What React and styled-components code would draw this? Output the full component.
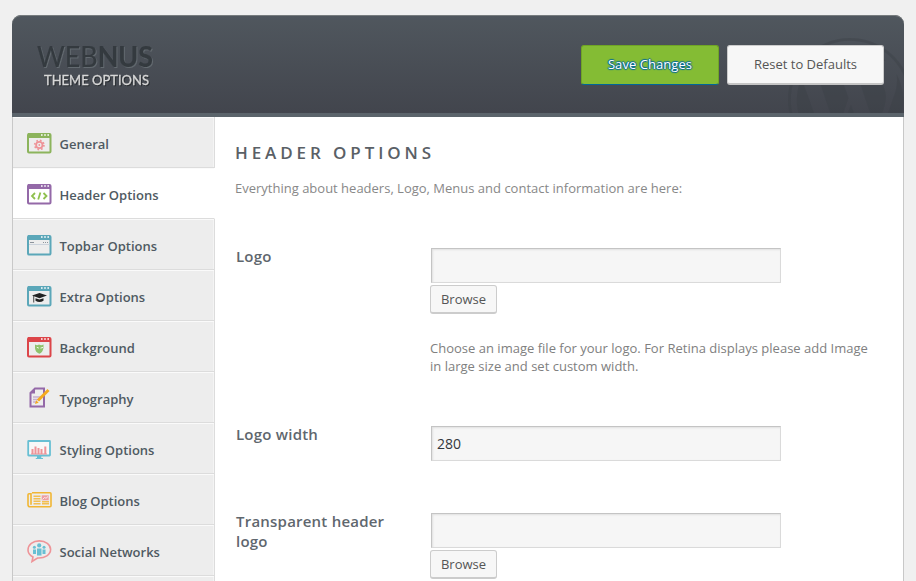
import React from "react";
import styled, { createGlobalStyle, css } from "styled-components";
import { FaWordpress } from "react-icons/fa";

const GlobalStyle = createGlobalStyle`
  * { box-sizing: border-box; }
  html, body { margin: 0; background: #f0f0f0; }
  body { height: 581px; overflow: hidden; font-family: "Open Sans", sans-serif; }
`;

const Panel = styled.div`
  width: 892px;
  height: 566px;
  margin: 15px 0 0 12px;
  display: flex;
  flex-direction: column;
`;

const Header = styled.header`
  position: relative;
  flex: 0 0 102px;
  display: flex;
  justify-content: space-between;
  align-items: flex-start;
  padding: 24px 20px 0 23px;
  overflow: hidden;
  border-radius: 9px 9px 0 0;
  border-bottom: 4px solid #5b646b;
  background: linear-gradient(#50575e, #42454d);
  box-shadow: inset 0 1px 0 #777c7e;
`;

const Watermark = styled(FaWordpress)`
  position: absolute;
  left: 774px;
  top: 21px;
  width: 128px;
  height: 128px;
  color: #3b4046;
  opacity: 0.38;
`;

const Brand = styled.svg`
  display: block;
  width: 124px;
  height: 52px;
  overflow: visible;
  font-family: Lato, sans-serif;
`;

const Wordmark = styled.g`
  font-size: 28.5px;
  fill: #343a3f;
  stroke: #343a3f;
  stroke-width: 0.2px;
  filter: drop-shadow(1px 1px 0 #636a70);
`;

const Tagline = styled.g`
  font-size: 14px;
  fill: #d7d7d7;
  stroke: #d7d7d7;
  stroke-width: 0.35px;
  filter: drop-shadow(1px 1px 0 #292d31);
`;

const Actions = styled.div`
  position: relative;
  display: flex;
  gap: 8px;
  padding-top: 6px;
`;

const buttonBase = css`
  padding: 0;
  font-family: inherit;
  font-size: 13px;
  border-radius: 3px;
`;

const HeaderButton = styled.button`
  ${buttonBase}
  width: ${(p) => (p.$primary ? 138 : 157)}px;
  height: 40px;
  padding-bottom: ${(p) => (p.$primary ? 2 : 1)}px;
  letter-spacing: ${(p) => (p.$primary ? "0.06px" : "0")};
  color: ${(p) => (p.$primary ? "#fff" : "#555")};
  background: ${(p) => (p.$primary ? "#84bc34" : "#f7f7f7")};
  border: 1px solid ${(p) => (p.$primary ? "#70a524" : "#ccc")};
  border-bottom: ${(p) => (p.$primary ? "1px solid #006799" : "2px solid #c5c5c5")};
  ${(p) =>
    p.$primary &&
    css`
      text-shadow: 0 -1px 1px #006799, 1px 0 1px #006799, 0 1px 1px #006799, -1px 0 1px #006799;
    `}
`;

const Body = styled.div`
  flex: 1;
  min-height: 0;
  display: flex;
  background: #fff;
  border: 1px solid #c8c8c8;
  border-width: 0 1px;
`;

const Sidebar = styled.nav`
  flex: 0 0 202px;
  overflow: hidden;
`;

const NavItem = styled.a`
  display: flex;
  align-items: center;
  gap: 7.5px;
  height: 51px;
  padding: 4px 0 0 14px;
  color: #4f5a62;
  font-size: 13px;
  font-weight: 600;
  letter-spacing: 0;
  background: ${(p) => (p.$active ? "#fff" : "#ededed")};
  border-bottom: 1px solid #dcdcdc;
  border-right: 1px solid ${(p) => (p.$active ? "#fff" : "#dcdcdc")};
  box-shadow: inset 0 1px 0 #fafafa${(p) => (p.$active ? "" : ", inset -1px 0 0 #f4f4f4")};
`;

const NavIcon = styled.svg`
  flex: none;
  display: block;
  width: 25px;
  height: 24px;
  margin-top: -2px;
`;

const Main = styled.main`
  flex: 1;
  padding: 26px 0 0 20px;
`;

const Title = styled.h1`
  margin: 0;
  height: 20px;
  line-height: 20px;
  color: #5a6066;
  font-size: 17px;
  font-weight: 600;
  letter-spacing: 3.9px;
  white-space: nowrap;
`;

const Intro = styled.p`
  margin: 16px 0 0;
  height: 18px;
  line-height: 18px;
  color: #888;
  font-size: 13px;
`;

const Field = styled.section`
  display: grid;
  grid-template-columns: 160px 450px;
  column-gap: 35px;
  height: ${(p) => p.$height}px;
`;

const Fields = styled.div`
  padding-top: 51px;
`;

const Label = styled.label`
  margin-top: -2px;
  padding-left: 1px;
  color: #5f676e;
  font-size: 15px;
  font-weight: 600;
  line-height: 20px;
  letter-spacing: 0.22px;
`;

const Control = styled.div`
  display: flex;
  flex-direction: column;
  align-items: flex-start;
`;

const TextInput = styled.input`
  width: 350px;
  height: 35px;
  margin: 0 0 0 1px;
  padding: 0 5px;
  color: #32373c;
  font-family: inherit;
  font-size: 14px;
  background: #f6f6f6;
  border: 1px solid #dadada;
  border-top-color: #c4c4c4;
  border-left-color: #c4c4c4;
  border-radius: 0;
  box-shadow: inset 1px 1px 2px rgba(0, 0, 0, 0.09);
`;

const Browse = styled.button`
  ${buttonBase}
  width: 67px;
  height: 29px;
  margin-top: 2px;
  color: #555;
  background: #f7f7f7;
  border: 1px solid #ccc;
  border-bottom-width: 2px;
`;

const Help = styled.p`
  margin: 25px 0 0;
  color: #808080;
  font-size: 13px;
  line-height: 18px;
  letter-spacing: 0.01px;
  white-space: nowrap;
`;

function BrowserFrame({ color, children }) {
  return (
    <>
      <rect x="1" y="3" width="22.5" height="18.5" rx="1" fill="none" stroke={color} strokeWidth="2" />
      <path d="M1 2h22v5H1z" fill={color} />
      <path d="M14 4h1.6M17.2 4h1.6M20.4 4H22" stroke="#fff" strokeWidth="1.6" />
      {children}
    </>
  );
}

const icons = {
  general: (
    <BrowserFrame color="#8cb45c">
      <circle cx="12.3" cy="14" r="3.2" fill="none" stroke="#ee9498" strokeWidth="1.8" />
      <circle cx="12.3" cy="14" r="4.6" fill="none" stroke="#ee9498" strokeWidth="1.7" strokeDasharray="1.7 1.91" />
      <circle cx="12.3" cy="14" r=".9" fill="#ee9498" />
    </BrowserFrame>
  ),
  header: (
    <BrowserFrame color="#9469a8">
      <path d="M8 11l-3 3 3 3M16.5 11l3 3-3 3M13.4 10.5l-2.2 7" fill="none" stroke="#8fc04e" strokeWidth="1.8" />
    </BrowserFrame>
  ),
  topbar: (
    <BrowserFrame color="#5ba7b9">
      <path d="M2 11.5h20.5" stroke="#ccd3dc" />
      <path d="M3 9.5h4M16 9.5h1M18 9.5h1M20 9.5h1" stroke="#8d949c" />
    </BrowserFrame>
  ),
  extra: (
    <BrowserFrame color="#5ba7b9">
      <path d="M5 11.5L12.5 9l7.5 2.5-7.5 2.7z" fill="#222" />
      <path d="M8.5 14.2l4 1.3 4-1.3v2.6q-4 2.6-8 0z" fill="#222" />
      <path d="M6.7 12v6.5" stroke="#555" strokeWidth="1.1" />
    </BrowserFrame>
  ),
  background: (
    <BrowserFrame color="#dc4549">
      <path d="M8 9.5q2.2 1.3 4 0 2.2 1.4 4.5 0v3.5q-.8 4.5-4.2 5.7-3.9-1.5-4.3-5.5z" fill="#8fc26b" />
      <path d="M9.8 12.3l2 .8M13.5 13.1l2.6-.7" stroke="#fff" strokeWidth=".9" />
    </BrowserFrame>
  ),
  typography: (
    <>
      <path d="M8 2.5h9v18H3.5V7z" fill="none" stroke="#9469a8" strokeWidth="2" />
      <path d="M3.5 7.5H8v-5z" fill="#9469a8" />
      <path d="M6 11h8M6 13.5h7M6 16h3" stroke="#c6afd0" strokeWidth="1.3" />
      <path d="M11 14.5L21.5 4" stroke="#f4aa20" strokeWidth="3" />
      <path d="M8 18l1.2-3.7 2.5 2.5z" fill="#f4aa20" />
    </>
  ),
  styling: (
    <>
      <rect x="1.2" y="4" width="21.8" height="14.5" rx=".5" fill="#f8f8f8" stroke="#68bfd3" strokeWidth="1.8" />
      <path d="M10 19h4.3v2H16v1H8.8v-1H10z" fill="#68bfd3" />
      <path d="M5.5 17v-5M8.5 17V9.5M11.5 17v-6M14.5 17v-5M18.3 17V9.5" stroke="#ee9498" strokeWidth="2" />
      <path d="M4 17h16" stroke="#ee9498" />
    </>
  ),
  blog: (
    <>
      <path d="M5 4.8h18q1 0 1 1v12q0 1-1 1H3q-2 0-2-2v-10q0-1 1-1h2v11" fill="none" stroke="#f1b634" strokeWidth="1.6" />
      <path d="M6.5 8.3h7M6.5 10.8h7M6.5 13.3h7M6.5 15.8h7M15 15.8h7M15 13.8h7" stroke="#f3bf50" strokeWidth="1.4" />
      <path d="M14.7 7.3h7v5h-7z" fill="#ee9fa3" />
      <path d="M15.5 11.5l2-2 1.5.8L21 8.5" stroke="#fff" strokeWidth=".8" fill="none" />
    </>
  ),
  social: (
    <>
      <path d="M6 18Q1 15.5 1 11C1 5.5 6 1.9 12.3 1.9S23.6 5.5 23.6 10.5 18 19.5 10.5 19L5 22.5z" fill="none" stroke="#ee9498" strokeWidth="1.6" />
      <circle cx="12.2" cy="6.4" r="2.1" fill="#68bfd3" />
      <circle cx="7.4" cy="8.2" r="1.5" fill="#68bfd3" />
      <circle cx="17" cy="8.2" r="1.5" fill="#68bfd3" />
      <path d="M10 9.4h4.5v7H10zM6 10.4h3v4.5H6zM15.5 10.4h3v4.5h-3z" fill="#68bfd3" />
    </>
  ),
};

const navItems = [
  ["general", "General"],
  ["header", "Header Options"],
  ["topbar", "Topbar Options"],
  ["extra", "Extra Options"],
  ["background", "Background"],
  ["typography", "Typography"],
  ["styling", "Styling Options"],
  ["blog", "Blog Options"],
  ["social", "Social Networks"],
  ["more", ""],
];

function BrandMark() {
  return (
    <Brand viewBox="0 0 124 52">
      <Wordmark>
        <text x="2" y="28" textLength="116" lengthAdjust="spacingAndGlyphs">
          WEB<tspan fontWeight="700">NUS</tspan>
        </text>
      </Wordmark>
      <Tagline>
        <text x="9" y="46" textLength="105" lengthAdjust="spacingAndGlyphs">THEME OPTIONS</text>
      </Tagline>
    </Brand>
  );
}

export default function App() {
  return (
    <>
      <GlobalStyle />
      <Panel>
        <Header>
          <Watermark />
          <BrandMark />
          <Actions>
            <HeaderButton $primary>Save Changes</HeaderButton>
            <HeaderButton>Reset to Defaults</HeaderButton>
          </Actions>
        </Header>
        <Body>
          <Sidebar>
            {navItems.map(([icon, label]) => (
              <NavItem key={icon} $active={icon === "header"}>
                {label && <NavIcon viewBox="0 0 25 24">{icons[icon]}</NavIcon>}
                {label}
              </NavItem>
            ))}
          </Sidebar>
          <Main>
            <Title>HEADER OPTIONS</Title>
            <Intro>Everything about headers, Logo, Menus and contact information are here:</Intro>
            <Fields>
              <Field $height={178}>
                <Label>Logo</Label>
                <Control>
                  <TextInput />
                  <Browse>Browse</Browse>
                  <Help>
                    Choose an image file for your logo. For Retina displays please add Image
                    <br />
                    in large size and set custom width.
                  </Help>
                </Control>
              </Field>
              <Field $height={87}>
                <Label>Logo width</Label>
                <Control>
                  <TextInput defaultValue="280" />
                </Control>
              </Field>
              <Field $height={68}>
                <Label>
                  Transparent header
                  <br />
                  logo
                </Label>
                <Control>
                  <TextInput />
                  <Browse>Browse</Browse>
                </Control>
              </Field>
            </Fields>
          </Main>
        </Body>
      </Panel>
    </>
  );
}
